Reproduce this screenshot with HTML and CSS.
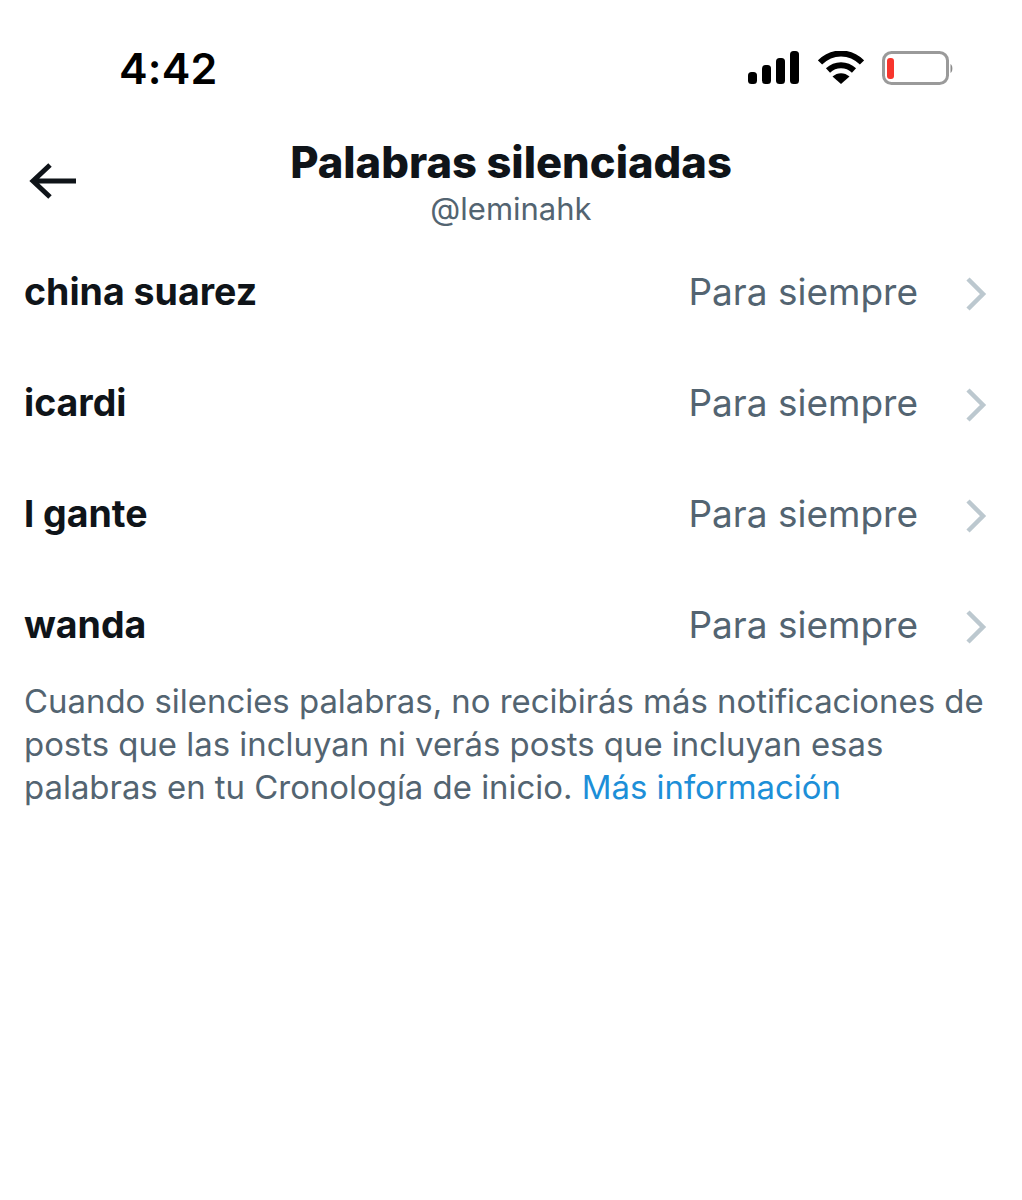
FILE: index.html
```html
<!DOCTYPE html>
<html lang="es">
<head>
    <meta charset="UTF-8">
    <meta name="viewport" content="width=device-width, initial-scale=1.0">
    <title>Palabras silenciadas</title>
    <link rel="stylesheet" href="styles.css">
</head>
<body>

<div class="status-bar">
    <span class="clock">4:42</span>
    <div class="status-icons">
        <svg class="signal" width="52" height="34" viewBox="0 0 52 34">
            <rect x="0" y="21" width="9" height="12" rx="3.5"/>
            <rect x="14" y="14" width="9" height="19" rx="3.5"/>
            <rect x="28" y="7" width="9" height="26" rx="3.5"/>
            <rect x="42" y="0" width="9" height="33" rx="3.5"/>
        </svg>
        <svg class="wifi" width="46" height="34" viewBox="0 0 46 34">
            <path d="M2 11.5 C14 -0.5 32 -0.5 44 11.5" fill="none" stroke="#000" stroke-width="6"/>
            <path d="M10 19.5 C17.5 12.5 28.5 12.5 36 19.5" fill="none" stroke="#000" stroke-width="6"/>
            <path d="M23 33 L14.5 25.5 C19.5 21 26.5 21 31.5 25.5 Z" fill="#000"/>
        </svg>
        <svg class="battery" width="72" height="34" viewBox="0 0 72 34">
            <rect x="1.5" y="1.5" width="64" height="31" rx="8" fill="#fff" stroke="#9a9a9a" stroke-width="3"/>
            <rect x="5" y="7" width="7" height="21" rx="3" fill="#f8352d"/>
            <path d="M68.5 13 C71 14 71 21 68.5 22 Z" fill="#8a8a8a"/>
        </svg>
    </div>
</div>

<div class="nav-bar">
    <svg class="back-icon" width="48" height="38" viewBox="0 0 48 38">
        <path d="M47 19 H4 M21 3 L4 19 L21 35" fill="none" stroke="#0f1419" stroke-width="5"/>
    </svg>
    <div class="nav-title">
        <h1>Palabras silenciadas</h1>
        <div class="handle">@leminahk</div>
    </div>
</div>

<ul class="word-list">
    <li class="word-row">
        <span class="word">china suarez</span>
        <span class="duration">Para siempre</span>
        <svg class="chevron" width="24" height="36" viewBox="0 0 24 36"><path d="M4 3 L19 18 L4 33" fill="none" stroke="#bcc8cf" stroke-width="4.5"/></svg>
    </li>
    <li class="word-row">
        <span class="word">icardi</span>
        <span class="duration">Para siempre</span>
        <svg class="chevron" width="24" height="36" viewBox="0 0 24 36"><path d="M4 3 L19 18 L4 33" fill="none" stroke="#bcc8cf" stroke-width="4.5"/></svg>
    </li>
    <li class="word-row">
        <span class="word">l gante</span>
        <span class="duration">Para siempre</span>
        <svg class="chevron" width="24" height="36" viewBox="0 0 24 36"><path d="M4 3 L19 18 L4 33" fill="none" stroke="#bcc8cf" stroke-width="4.5"/></svg>
    </li>
    <li class="word-row">
        <span class="word">wanda</span>
        <span class="duration">Para siempre</span>
        <svg class="chevron" width="24" height="36" viewBox="0 0 24 36"><path d="M4 3 L19 18 L4 33" fill="none" stroke="#bcc8cf" stroke-width="4.5"/></svg>
    </li>
</ul>

<p class="note">Cuando silencies palabras, no recibirás más notificaciones de posts que las incluyan ni verás posts que incluyan esas palabras en tu Cronología de inicio. <a href="#">Más información</a></p>

</body>
</html>
```

FILE: styles.css
```css
body {
    margin: 0;
    padding-top: 1px;
    background: #fff;
    color: #0f1419;
    font-family: Inter, "Liberation Sans", sans-serif;
}
.status-bar {
    display: flex;
    justify-content: space-between;
    align-items: center;
    height: 134px;
    padding: 0 68px 0 119px;
}
.clock {
    font-size: 43px;
    font-weight: 600;
    color: #000;
    letter-spacing: 0.2px;
}
.status-icons {
    display: flex;
    align-items: center;
    gap: 18px;
}
.nav-bar {
    position: relative;
    height: 101px;
}
.back-icon {
    position: absolute;
    left: 29px;
    top: 27px;
}
.nav-title {
    padding-top: 2px;
    text-align: center;
}
h1 {
    margin: 0;
    font-size: 43.5px;
    line-height: 50px;
    font-weight: 800;
}
.handle {
    margin-top: 3px;
    font-size: 31px;
    line-height: 38px;
    color: #536471;
}
.word-list {
    list-style: none;
    margin: 0;
    padding: 0 34px 0 24px;
}
.word-row {
    display: flex;
    align-items: center;
    height: 111px;
}
.word {
    flex: 1;
    font-size: 37.5px;
    font-weight: 700;
}
.duration {
    font-size: 37px;
    color: #536471;
}
.chevron {
    margin-left: 46px;
    margin-top: 4px;
}
.note {
    margin: 0;
    padding: 0 24px;
    font-size: 32.9px;
    line-height: 43px;
    color: #536471;
}
.note a {
    color: #1d8fd8;
    text-decoration: none;
}
```
